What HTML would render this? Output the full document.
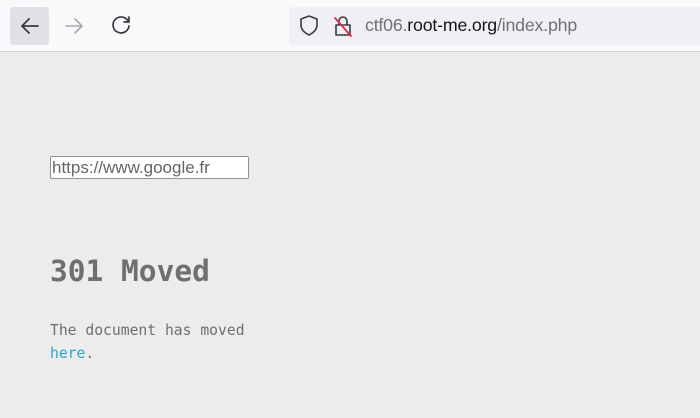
<!DOCTYPE html>
<html><head><style>
body{margin:0;width:700px;height:418px;background:#ececec;overflow:hidden;font-family:"Liberation Sans",sans-serif;position:relative}
.tb{position:absolute;left:0;top:0;width:700px;height:51px;background:#f9f9fb;border-bottom:1px solid #cfcfd8}
.back{position:absolute;left:10px;top:7px;width:39px;height:38px;background:#e0e0e6;border-radius:4px}
.url{position:absolute;left:289px;top:7px;width:420px;height:38px;background:#f0f0f4;border-radius:4px}
.ut{position:absolute;left:365px;top:15px;font-size:17.8px;color:#6f6f7a;letter-spacing:-0.2px}
.ut b{font-weight:normal;color:#15141a}
input{position:absolute;left:50px;top:156px;width:199px;height:23px;box-sizing:border-box;border:1px solid #8f8f9d;border-radius:2px;background:#fff;font-family:"Liberation Sans",sans-serif;font-size:17px;color:#666;padding:0 1px;margin:0}
h1{position:absolute;left:50px;top:252px;margin:0;font-family:"DejaVu Sans Mono",monospace;font-size:29.5px;color:#6f6f6f;font-weight:bold;line-height:38px}
p{position:absolute;left:50px;top:319px;margin:0;font-family:"DejaVu Sans Mono",monospace;font-size:14.7px;color:#6f6f6f;line-height:23px}
a{color:#2aa4cf;text-decoration:none}
</style></head><body>
<div class="tb"></div>
<div class="back"></div>
<div class="url"></div>
<svg style="position:absolute;left:0;top:0" width="700" height="51" fill="none" stroke-linecap="round" stroke-linejoin="round">
<path d="M38 26H22M29 19l-7 7 7 7" stroke="#3a3a40" stroke-width="1.8"/>
<path d="M66 26h16M75 19l7 7-7 7" stroke="#a8a8ae" stroke-width="1.6"/>
<path d="M128.5 22a8 8 0 1 0 0.5 4" stroke="#3a3a40" stroke-width="1.7"/><path d="M129 17v5h-5" stroke="#3a3a40" stroke-width="1.7"/>
<path d="M301 19l8 -3 8 3v6c0 5-4 8-8 10-4-2-8-5-8-10z" stroke="#3a3a40" stroke-width="1.6"/>
<path d="M339 25v-4a4 4 0 0 1 8 0v4M336 25h14v10h-14z" stroke="#3a3a40" stroke-width="1.6"/>
<path d="M335 18l16 18" stroke="#e22850" stroke-width="1.8"/>
</svg>
<div class="ut">ctf06.<b>root-me.org</b>/index.php</div>
<input value="https://www.google.fr">
<h1>301 Moved</h1>
<p>The document has moved<br><a>here</a>.</p>
</body></html>
